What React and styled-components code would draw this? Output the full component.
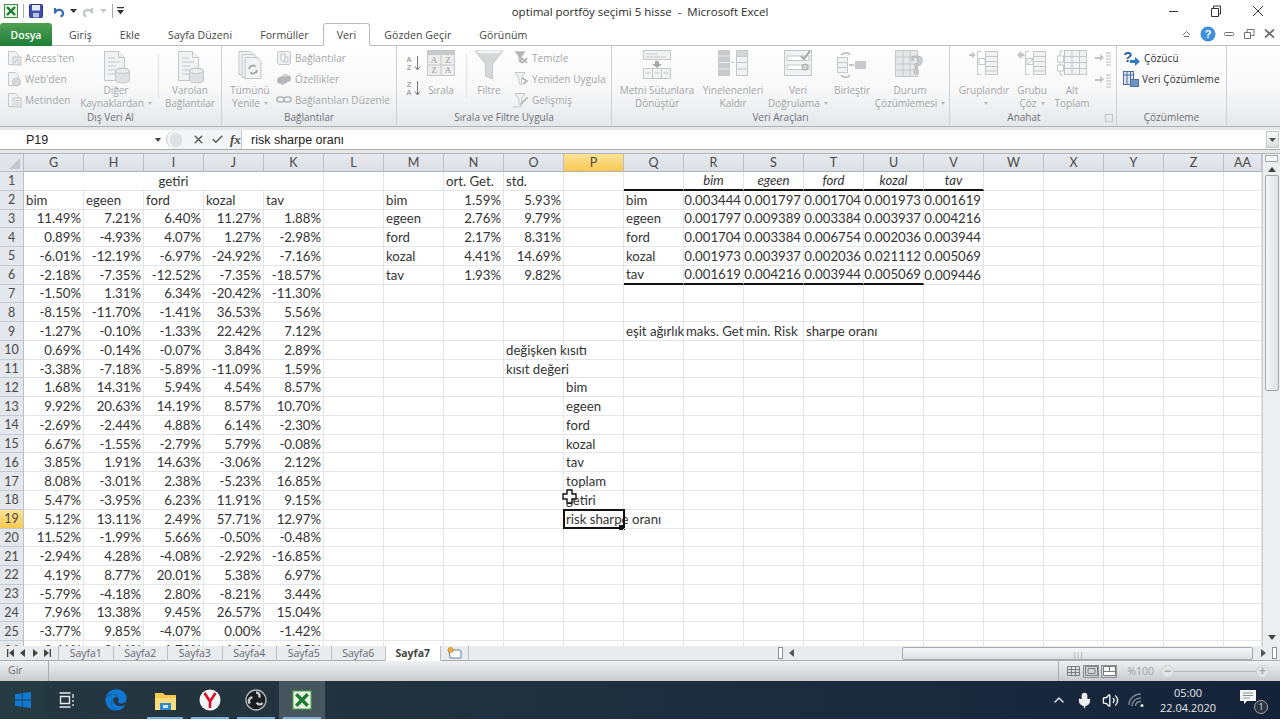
import React from "react";
import styled, { createGlobalStyle } from "styled-components";
import { Check, ChevronUp, Mic, Volume2, X } from "lucide-react";
import { FaEdge } from "react-icons/fa";

const GlobalStyle = createGlobalStyle`
  html, body {
    margin: 0;
    width: 1280px;
    height: 720px;
    overflow: hidden;
    background: #fff;
  }
  * { box-sizing: border-box; }
`;

const UI_FONT = `"Open Sans", "Noto Sans", sans-serif`;
const CELL_FONT = `Lato, "Open Sans", sans-serif`;
const LINE = "#c5c7ca";
const FILL = "#f1f2f3";
const DARK = "#b3b5b8";

const Window = styled.div`
  width: 1280px;
  height: 720px;
  display: flex;
  flex-direction: column;
  font-family: ${UI_FONT};
  overflow: hidden;
`;

/* title bar */
const TitleBar = styled.div`
  height: 22px;
  display: grid;
  grid-template-columns: 1fr auto 1fr;
  align-items: center;
  background: #fff;
`;
const QuickAccess = styled.div`
  display: flex;
  align-items: center;
  padding-left: 4px;
  height: 100%;
`;
const QuickSep = styled.span`
  width: 1px;
  height: 14px;
  background: #a9abae;
  margin: ${(p) => p.$m || "0 6px"};
`;
const TitleText = styled.div`
  font-size: 11.5px;
  color: #2b2b2b;
  white-space: pre;
`;
const WindowButtons = styled.div`
  display: flex;
  justify-content: flex-end;
  align-items: center;
  padding-right: 16px;
  gap: 30px;
`;

/* tabs */
const TabRow = styled.div`
  height: 24px;
  display: flex;
  align-items: flex-end;
  background: #fff;
  border-bottom: 1px solid #babcbf;
`;
const FileTab = styled.div`
  width: 52px;
  height: 23px;
  margin-right: 3px;
  margin-bottom: -1px;
  background: linear-gradient(#4fa053, #1f7d37);
  border-radius: 3px 3px 0 0;
  color: #fff;
  font-size: 10.5px;
  font-weight: 600;
  display: flex;
  align-items: center;
  justify-content: center;
`;
const Tab = styled.div`
  height: 23px;
  padding: 0 13px;
  margin-bottom: -1px;
  font-size: 10.5px;
  letter-spacing: 0.1px;
  color: #444;
  display: flex;
  align-items: center;
  border: 1px solid ${(p) => (p.$active ? "#babcbf" : "transparent")};
  border-bottom: 1px solid ${(p) => (p.$active ? "#fff" : "transparent")};
  border-radius: 3px 3px 0 0;
  background: ${(p) => (p.$active ? "#fff" : "transparent")};
`;
const HelpButtons = styled.div`
  margin-left: auto;
  height: 23px;
  display: flex;
  align-items: center;
  gap: 7px;
  padding-right: 4px;
`;

/* ribbon */
const Ribbon = styled.div`
  height: 80px;
  display: flex;
  background: linear-gradient(#fefefe 0%, #f8f8f9 55%, #e5e7ea 100%);
`;
const Group = styled.div`
  width: ${(p) => p.$w}px;
  flex: none;
  display: flex;
  flex-direction: column;
  border-right: 1px solid #cfd1d4;
`;
const GroupBody = styled.div`
  height: 64px;
  display: flex;
  padding: 4px 0 0 ${(p) => p.$pl || 0}px;
`;
const GroupLabel = styled.div`
  height: 16px;
  line-height: 15px;
  text-align: center;
  font-size: 10px;
  color: #6d7278;
  padding-right: ${(p) => p.$pr || 0}px;
  position: relative;
`;
const Launcher = styled.span`
  position: absolute;
  right: 3px;
  top: 4px;
  width: 8px;
  height: 8px;
  border: 1px solid #c3c5c8;
`;
const LargeButton = styled.div`
  width: ${(p) => p.$w}px;
  margin-left: ${(p) => p.$ml || 0}px;
  flex: none;
  display: flex;
  flex-direction: column;
  align-items: center;
  font-size: 10px;
  line-height: 12.5px;
  color: ${(p) => (p.$on ? "#333" : "#a4a6a9")};
  text-align: center;
  white-space: nowrap;
`;
const LargeIcon = styled.div`
  height: 34px;
  display: flex;
  align-items: flex-start;
  justify-content: center;
`;
const Caret = styled.span`
  display: inline-block;
  margin-left: 4px;
  vertical-align: middle;
  border-left: 2.5px solid transparent;
  border-right: 2.5px solid transparent;
  border-top: 3px solid #b8babd;
`;
const SmallStack = styled.div`
  margin-left: ${(p) => p.$ml || 0}px;
  display: flex;
  flex-direction: column;
  gap: 4.5px;
  flex: none;
`;
const SmallButton = styled.div`
  height: 16.5px;
  display: flex;
  align-items: center;
  gap: 3px;
  font-size: 10px;
  letter-spacing: 0.1px;
  color: ${(p) => (p.$on ? "#333" : "#a4a6a9")};
  white-space: nowrap;
`;
const RibbonSep = styled.div`
  width: 1px;
  height: 44px;
  margin: 4px ${(p) => p.$mr || 0}px 0 ${(p) => p.$ml || 0}px;
  background: #e1e2e4;
  flex: none;
`;

/* formula bar */
const FormulaWrap = styled.div`
  height: 28px;
  background: #e6e7e9;
  border-top: 1px solid #b0b3b6;
  padding: 3px 0 3px;
  border-bottom: 1px solid #b3b5b8;
`;
const FormulaBar = styled.div`
  height: 20px;
  display: flex;
  align-items: center;
  background: #fff;
  border-bottom: 1px solid #a9abae;
  font-family: "Liberation Sans", sans-serif;
  font-size: 12.5px;
  color: #222;
`;
const NameBox = styled.div`
  width: 166px;
  display: flex;
  align-items: center;
  position: relative;
  justify-content: center;
  padding-right: 92px;
  height: 100%;
`;
const NameArrow = styled.span`
  position: absolute;
  right: 5px;
  top: 8px;
  border-left: 3px solid transparent;
  border-right: 3px solid transparent;
  border-top: 4px solid #444;
`;
const FormulaTools = styled.div`
  width: 76px;
  height: 100%;
  display: flex;
  align-items: center;
  gap: 6px;
  border-right: 1px solid #c6c8cb;
  background: #f3f4f5;
  border-radius: 10px 0 0 10px;
  border-left: 1px solid #c6c8cb;
  padding-left: 3px;
  flex: none;
`;
const Bubble = styled.span`
  width: 12px;
  height: 14px;
  border-radius: 7px;
  background: #dfe1e4;
  margin-right: 4px;
`;
const FxMark = styled.span`
  font-family: "Liberation Serif", serif;
  font-style: italic;
  font-weight: 700;
  font-size: 13px;
  color: #4a4a4a;
`;
const FormulaText = styled.div`
  flex: 1;
  padding-left: 9px;
`;
const FormulaExpand = styled.div`
  width: 13px;
  height: 17px;
  margin-right: 1px;
  background: linear-gradient(#fafafa, #dcdee1);
  border: 1px solid #c3c5c8;
  display: flex;
  align-items: center;
  justify-content: center;
`;

/* sheet */
const SheetArea = styled.div`
  height: 492px;
  display: flex;
  position: relative;
`;
const Grid = styled.div`
  width: 1262px;
  height: 492px;
  overflow: hidden;
  display: grid;
  grid-template-columns: 24px repeat(20, 60px) 38px;
  grid-template-rows: 18px repeat(26, 18.78px);
  font-family: ${CELL_FONT};
  font-size: 13.2px;
  color: #333;
  background: #fff;
`;
const Corner = styled.div`
  background: #e1e4e8;
  border-right: 1px solid #b9bcc2;
  border-bottom: 1px solid #b9bcc2;
  position: relative;
  &::after {
    content: "";
    position: absolute;
    right: 3px;
    bottom: 2px;
    border-left: 11px solid transparent;
    border-bottom: 11px solid #c3c7cc;
  }
`;
const ColHead = styled.div`
  background: ${(p) => (p.$sel ? "linear-gradient(#fbe39a, #f8c94f)" : "linear-gradient(#e6e9ed, #dcdfe4)")};
  border-right: 1px solid #bcc0c5;
  border-bottom: 1px solid #b0b3b8;
  color: #4a4a4a;
  font-size: 12.5px;
  display: flex;
  align-items: center;
  justify-content: center;
`;
const RowHead = styled(ColHead)`
  background: ${(p) => (p.$sel ? "linear-gradient(#fbe39a, #f8c94f)" : "#e4e7eb")};
  border-bottom: 1px solid #c6c9ce;
`;
const Cell = styled.div`
  border-right: 1px solid #e3e5e8;
  border-bottom: 1px solid ${(p) => (p.$under ? "#111" : "#e3e5e8")};
  ${(p) => p.$under && "border-bottom-width: 2px;"}
  ${(p) => p.$span && `grid-column: span ${p.$span};`}
  padding: 0 2px;
  white-space: nowrap;
  display: flex;
  align-items: center;
  position: relative;
  justify-content: ${(p) => ({ right: "flex-end", center: "center" }[p.$align] || "flex-start")};
  font-style: ${(p) => (p.$italic ? "italic" : "normal")};
`;
const Selection = styled.span`
  position: absolute;
  left: -1px;
  top: -1px;
  right: -2px;
  bottom: -1px;
  border: 2px solid #111;
  pointer-events: none;
  &::after {
    content: "";
    position: absolute;
    right: -2px;
    bottom: -3px;
    width: 6px;
    height: 5px;
    background: #111;
  }
`;
const CellCursor = styled.svg`
  position: absolute;
  left: 562px;
  top: 335px;
`;
const VScroll = styled.div`
  width: 18px;
  height: 100%;
  background: #eceef0;
  border-left: 1px solid #c8cacd;
  display: flex;
  flex-direction: column;
  align-items: center;
`;
const SplitBox = styled.div`
  width: 13px;
  height: 7px;
  margin-top: 1px;
  background: #f4f5f6;
  border: 1px solid #a8aaad;
`;
const ScrollArrow = styled.div`
  border-left: 4px solid transparent;
  border-right: 4px solid transparent;
  ${(p) => (p.$down ? "border-top: 5px solid #444;" : "border-bottom: 5px solid #444;")}
  margin: ${(p) => p.$m};
`;
const VThumb = styled.div`
  width: 14px;
  height: 216px;
  margin-top: 3px;
  border: 1px solid #a4a7ab;
  border-radius: 2px;
  background: linear-gradient(90deg, #f6f7f8, #dfe1e5);
  flex: none;
`;

/* sheet tabs */
const TabBar = styled.div`
  height: 15px;
  display: flex;
  align-items: center;
  background: #e9ebee;
  font-size: 10.5px;
  color: #5b5e62;
  border-bottom: 1px solid #a9abae;
  position: relative;
`;
const NavArrows = styled.div`
  width: 59px;
  height: 100%;
  display: flex;
  align-items: center;
  justify-content: space-around;
  padding: 0 4px;
  border-right: 1px solid #b5b7ba;
  color: #444;
`;
const SheetTab = styled.div`
  width: 54.5px;
  height: 15px;
  flex: none;
  text-align: center;
  line-height: 14px;
  background: ${(p) => (p.$active ? "#fff" : "transparent")};
  font-weight: ${(p) => (p.$active ? 700 : 400)};
  color: ${(p) => (p.$active ? "#444" : "#666a6e")};
  border-right: 1px solid #bfc1c4;
  transform: skewX(0deg);
`;
const NewSheet = styled.div`
  width: 28px;
  height: 100%;
  display: flex;
  align-items: center;
  justify-content: center;
  border-right: 1px solid #bfc1c4;
  flex: none;
`;
const HScrollZone = styled.div`
  margin-left: auto;
  width: 502px;
  height: 100%;
  display: flex;
  align-items: center;
`;
const MiniSplit = styled.span`
  width: 5px;
  height: 12px;
  border: 1px solid #8f9295;
  background: #fff;
  flex: none;
  margin: ${(p) => p.$m};
`;
const HThumb = styled.div`
  width: 351px;
  height: 13px;
  margin-left: 108px;
  margin-right: 8px;
  border: 1px solid #a7a9ad;
  border-radius: 2px;
  background: linear-gradient(#f7f8f9, #dcdee2);
  flex: none;
  display: flex;
  align-items: center;
  justify-content: center;
  color: #999;
  font-size: 8px;
  letter-spacing: -1px;
`;
const SideArrow = styled.span`
  border-top: 4px solid transparent;
  border-bottom: 4px solid transparent;
  ${(p) => (p.$left ? "border-right: 5px solid #555;" : "border-left: 5px solid #555;")}
  flex: none;
`;

/* status bar */
const StatusBar = styled.div`
  height: 20px;
  display: flex;
  align-items: center;
  background: linear-gradient(#eff0f2, #c9cbcf);
  font-size: 10.5px;
  color: #6a6d71;
`;
const StatusMode = styled.div`
  width: 49px;
  height: 100%;
  padding-left: 8px;
  line-height: 19px;
  border-right: 1px solid #a9abae;
`;
const ViewButtons = styled.div`
  margin-left: auto;
  display: flex;
  align-items: center;
  gap: 2px;
  padding-left: 6px;
  border-left: 1px solid #a9abae;
  height: 100%;
`;
const ViewButton = styled.div`
  width: 16px;
  height: 13px;
  display: flex;
  align-items: center;
  justify-content: center;
  background: ${(p) => (p.$on ? "#d3d5d8" : "transparent")};
  border: 1px solid ${(p) => (p.$on ? "#8d8f92" : "transparent")};
`;
const ZoomPct = styled.div`
  margin: 0 7px 0 10px;
  color: #a2a4a7;
  font-size: 10.5px;
`;
const ZoomTrack = styled.div`
  width: 108px;
  margin-right: 11px;
  display: flex;
  align-items: center;
  justify-content: space-between;
  position: relative;
  &::before {
    content: "";
    position: absolute;
    left: 10px;
    right: 10px;
    top: 6px;
    height: 1px;
    background: #b6b8bb;
  }
`;
const ZoomKnob = styled.span`
  width: 13px;
  height: 13px;
  border-radius: 50%;
  background: #e3e4e6;
  border: 1px solid #d0d2d4;
  color: #a8aaad;
  font: 700 12px/10px "Liberation Sans", sans-serif;
  text-align: center;
  position: relative;
`;

/* taskbar */
const Taskbar = styled.div`
  height: 38px;
  flex: none;
  display: flex;
  align-items: center;
  background: linear-gradient(90deg, #25373f 0%, #1f2f3e 45%, #15233a 100%);
  color: #dfe3e8;
`;
const StartButton = styled.div`
  width: 45px;
  height: 100%;
  display: flex;
  align-items: center;
  justify-content: center;
  background: #263a42;
`;
const TaskItem = styled.div`
  width: ${(p) => p.$w || 46}px;
  height: 100%;
  flex: none;
  display: flex;
  align-items: center;
  justify-content: center;
  position: relative;
  background: ${(p) => (p.$active ? "#47565e" : "transparent")};
  ${(p) =>
    p.$open &&
    `&::after {
      content: "";
      position: absolute;
      left: 4px;
      right: 4px;
      bottom: 0;
      height: 2px;
      background: #7db2d6;
    }`}
`;
const Tray = styled.div`
  margin-left: auto;
  height: 100%;
  display: flex;
  align-items: center;
  gap: 9px;
  padding-right: 18px;
`;
const Clock = styled.div`
  width: 62px;
  margin-left: 2px;
  text-align: center;
  font-size: 11px;
  line-height: 15.5px;
  color: #e4e7ea;
`;
const NoticeBadge = styled.div`
  margin-left: 12px;
  position: relative;
  width: 22px;
  height: 24px;
`;
const NoticeCount = styled.span`
  position: absolute;
  right: -6px;
  bottom: -2px;
  width: 14px;
  height: 14px;
  border-radius: 50%;
  background: #2a3440;
  border: 1px solid #aaa;
  font-size: 9px;
  line-height: 12px;
  text-align: center;
`;

/* --- drawn icons --- */
const ExcelLogo = ({ s = 14 }) => (
  <svg width={s} height={s} viewBox="0 0 14 14">
    <rect x="0.5" y="0.5" width="13" height="13" fill="#eaf3e6" stroke="#3b8a3f" />
    <path d="M3 3l8 8M11 3l-8 8" stroke="#1f7a32" strokeWidth="2.4" />
  </svg>
);
const SaveIcon = () => (
  <svg width="14" height="14" viewBox="0 0 14 14">
    <rect x="0.5" y="0.5" width="13" height="13" rx="1" fill="#3f4fb0" stroke="#2c3680" />
    <rect x="3" y="1" width="8" height="5.5" fill="#e8ecf5" />
    <rect x="4" y="9" width="6" height="4.5" fill="#b9c1df" />
  </svg>
);
const UndoIcon = ({ off }) => (
  <svg width="13" height="13" viewBox="0 0 13 13" fill="none">
    <path d="M3 8.5V3M3 7.5c1.5-3 7-4 8 .5 .3 1.5-1 3-2.5 3.5" stroke={off ? "#c3c6ca" : "#3a6db5"} strokeWidth="2.2" />
  </svg>
);
const RedoIcon = () => (
  <svg width="13" height="13" viewBox="0 0 13 13" fill="none">
    <path d="M10 8.5V3M10 7.5c-1.5-3-7-4-8 .5-.3 1.5 1 3 2.5 3.5" stroke="#c3c6ca" strokeWidth="2.2" />
  </svg>
);
const DropMark = ({ c = "#333", m = "0 0 0 5px" }) => (
  <svg width="7" height="4" viewBox="0 0 7 4" style={{ margin: m }}>
    <path d="M0 0h7L3.5 4z" fill={c} />
  </svg>
);
const CustomizeMark = () => (
  <svg width="7" height="8" viewBox="0 0 7 8">
    <path d="M0 0h7v1.3H0zM0 3h7L3.5 7.5z" fill="#333" />
  </svg>
);
const WinIcon = ({ kind }) => (
  <svg width="12" height="12" viewBox="0 0 12 12" fill="none" stroke="#333" strokeWidth="1">
    {kind === "min" && <path d="M1 6.5h9" />}
    {kind === "max" && <path d="M1.5 3.5h7v8h-7zM3.5 3.5V1h7v8h-2" />}
    {kind === "close" && <path d="M1 1l10 10M11 1L1 11" />}
  </svg>
);
const HelpIcon = () => (
  <svg width="16" height="16" viewBox="0 0 16 16">
    <circle cx="8" cy="8" r="7.5" fill="#3f8fdc" />
    <text x="8" y="12" textAnchor="middle" fontSize="11" fontWeight="700" fill="#fff" fontFamily="Liberation Sans">?</text>
  </svg>
);
const MiniWin = ({ kind }) => (
  <svg width="13" height="11" viewBox="0 0 13 11" fill="none" stroke="#6e7175">
    {kind === "up" && <path d="M3 7l3.5-3.5L10 7M4 8.5h5" />}
    {kind === "min" && <rect x="1.5" y="4.5" width="9" height="3" rx="1" />}
    {kind === "max" && <path d="M1.5 4.5h6v6h-6zM4 4.5V1.5h7v6H7.5" />}
    {kind === "close" && <path d="M2 1.5l9 8M11 1.5l-9 8" strokeWidth="1.8" />}
  </svg>
);
const Small = ({ children }) => (
  <svg width="16" height="16" viewBox="0 0 16 16" fill={FILL} stroke={LINE}>
    {children}
  </svg>
);
const PageSm = () => <path d="M2.5 1.5h7l3 3v10h-10z" />;
const AccessIc = () => (
  <Small><PageSm /><rect x="7" y="7" width="8" height="8" fill="#e4e5e7" /><path d="M9 13l2-4 2 4" /></Small>
);
const WebIc = () => (
  <Small><PageSm /><circle cx="10.5" cy="11" r="4" fill="#d8d9db" /></Small>
);
const TextIc = () => (
  <Small><PageSm /><rect x="7" y="6" width="8" height="9" /><path d="M8.5 8.5h5M8.5 11h5M8.5 13h5" /></Small>
);
const LinkIc = () => (
  <Small><rect x="1.5" y="1.5" width="13" height="13" rx="2" /><path d="M5 4h4v7H5zM9 7h3v5H7" /></Small>
);
const PropsIc = () => (
  <Small><path d="M1.5 7.5l8-4 5 2v4l-8 4-5-2z" fill={DARK} /><path d="M5 6l5-2 3 1" /></Small>
);
const ChainIc = () => (
  <Small><rect x="1" y="5" width="7" height="5" rx="2.5" fill="none" stroke={DARK} strokeWidth="1.6" /><rect x="8" y="5" width="7" height="5" rx="2.5" fill="none" stroke={DARK} strokeWidth="1.6" /></Small>
);
const ClearIc = () => (
  <Small><path d="M2 1.5h10L8.5 7v6L6 11.5V7z" fill={DARK} /><path d="M9 8l5 5M14 8l-5 5" stroke="#aaa" strokeWidth="1.6" /></Small>
);
const ReapplyIc = () => (
  <Small><path d="M2 1.5h10L8.5 7v7L6 12.5V7z" /><path d="M9 7l5 3-4 3" stroke={DARK} strokeWidth="1.6" fill="none" /></Small>
);
const AdvancedIc = () => (
  <Small><path d="M2 1.5h10L8.5 7v7L6 12.5V7z" /><path d="M7 12l7-7 1 1-7 7z" fill={DARK} /><path d="M0 15h8" /></Small>
);
const DocDbIc = () => (
  <svg width="30" height="34" viewBox="0 0 30 34" fill={FILL} stroke={LINE}>
    <path d="M3.5 1.5h14l6 6v23h-20z" />
    <path d="M7 8h7M7 12h12M7 16h8M7 20h8M7 24h8" />
    <path d="M17.5 1.5v6h6" />
    <path d="M14.5 21c0-4 14-4 14 0v9c0 4-14 4-14 0z" fill="#dfe0e2" />
    <ellipse cx="21.5" cy="21" rx="7" ry="2.5" fill="#eceded" />
  </svg>
);
const RefreshIc = () => (
  <svg width="26" height="30" viewBox="0 0 26 30" fill={FILL} stroke={LINE}>
    <path d="M2 1.5h12l4 4v19H2z" />
    <path d="M5 4.5h12l4 4v19H5z" />
    <path d="M8 7.5h12l4 4v17H8z" />
    <path d="M12 19a4 4 0 016.5-2.5M20 20a4 4 0 01-6.5 2.5" fill="none" stroke="#a8aaad" strokeWidth="2" />
  </svg>
);
const SortSmall = ({ top, bottom }) => (
  <svg width="18" height="17" viewBox="0 0 18 17">
    <text x="4" y="7" fontSize="7.5" fontWeight="700" textAnchor="middle" fill="#a6a8ab" fontFamily="Liberation Sans">{top}</text>
    <text x="4" y="15" fontSize="7.5" fontWeight="700" textAnchor="middle" fill="#a6a8ab" fontFamily="Liberation Sans">{bottom}</text>
    <path d="M12.5 1v13M10 11.5l2.5 3.5 2.5-3.5" stroke="#777" fill="none" />
  </svg>
);
const SortIc = () => (
  <svg width="28" height="26" viewBox="0 0 28 26" fill="#ededee" stroke={LINE}>
    <rect x="0.5" y="0.5" width="27" height="25" />
    <rect x="0.5" y="0.5" width="27" height="4" fill="#c8c9cb" />
    <path d="M14 5v20M1 15h26" />
    <g fontFamily="Liberation Serif" fontSize="9" fill="#9a9c9f" stroke="none" textAnchor="middle">
      <text x="7" y="13">A</text><text x="21" y="13">Z</text>
      <text x="7" y="23">Z</text><text x="21" y="23">A</text>
    </g>
  </svg>
);
const FunnelIc = () => (
  <svg width="30" height="30" viewBox="0 0 30 30">
    <path d="M1 1h28L18.5 14v15l-7-3V14z" fill="#d6d7d9" stroke="#c6c8cb" />
    <ellipse cx="15" cy="2" rx="13" ry="1.5" fill="#f1f2f3" />
  </svg>
);
const TextColsIc = () => (
  <svg width="30" height="30" viewBox="0 0 30 30" fill={FILL} stroke={LINE}>
    <rect x="1.5" y="0.5" width="27" height="9" />
    <path d="M4 4h12M4 7h20" />
    <path d="M13 11h4v3h3l-5 4-5-4h3z" fill="#a8aaad" stroke="none" />
    <rect x="1.5" y="18.5" width="27" height="10" />
    <path d="M10.5 18.5v10M19.5 18.5v10M3.5 23h5M12.5 23h5M21.5 23h5" />
  </svg>
);
const DuplicatesIc = () => (
  <svg width="30" height="26" viewBox="0 0 30 26" fill={FILL} stroke={LINE}>
    <rect x="0.5" y="0.5" width="11" height="25" fill="#c9cacc" />
    <path d="M0.5 6h11M0.5 12.5h11M0.5 19h11" stroke="#eee" />
    <rect x="18.5" y="0.5" width="11" height="25" />
    <rect x="18.5" y="0.5" width="11" height="6" fill="#d5d6d8" />
    <path d="M18.5 12.5h11M18.5 19h11M13 12.5h3" />
  </svg>
);
const ValidationIc = () => (
  <svg width="28" height="26" viewBox="0 0 28 26" fill={FILL} stroke={LINE}>
    <rect x="0.5" y="0.5" width="27" height="25" />
    <rect x="3" y="6" width="22" height="4.5" fill="#fff" />
    <rect x="3" y="15" width="22" height="4.5" fill="#fff" />
    <path d="M17 6l3 3 6-8" stroke="#a4a6a9" strokeWidth="2" fill="none" />
    <circle cx="21" cy="17" r="3" fill="#d3d4d6" stroke="#a4a6a9" />
  </svg>
);
const ConsolidateIc = () => (
  <svg width="30" height="30" viewBox="0 0 30 30" fill={FILL} stroke={LINE}>
    <rect x="0.5" y="7.5" width="10" height="15" />
    <path d="M0.5 12.5h10M0.5 17.5h10" />
    <rect x="18.5" y="11.5" width="10" height="7" fill="#c9cacc" />
    <path d="M12 15h5M4 5c4-4 8-2 9 0M4 25c4 4 8 2 9 0" stroke="#b4b6b9" strokeWidth="1.5" fill="none" />
  </svg>
);
const ScenarioIc = () => (
  <svg width="30" height="28" viewBox="0 0 30 28" fill="#e6e7e8" stroke={LINE}>
    <rect x="0.5" y="0.5" width="22" height="26" />
    <path d="M8 0.5v26M15 0.5v26M0.5 7h22M0.5 14h22M0.5 20h22" />
    <text x="22" y="24" fontSize="27" fontWeight="700" textAnchor="middle" fill="#cfd0d2" stroke="#b9bbbe" fontFamily="Liberation Serif">?</text>
  </svg>
);
const OutlineIc = ({ kind }) => (
  <svg width="30" height="26" viewBox="0 0 30 26" fill={FILL} stroke={LINE}>
    <path d="M12 1.5H8.5v23H12" fill="none" />
    <rect x="16.5" y="1.5" width="12" height="23" />
    <path d="M16.5 6.5h12M16.5 11.5h12M16.5 16.5h12M16.5 21h12" />
    <rect x="10" y="8.5" width="6" height="6" fill="#fff" />
    {kind === "group" ? (
      <path d="M0 4h3V1.5L6.5 5 3 8.500V6H0z" fill="#c3c4c6" stroke="none" />
    ) : (
      <path d="M7 4H4V1.500L.5 5 4 8.500V6h3zM10 15l6-6" fill="#c3c4c6" />
    )}
  </svg>
);
const SubtotalIc = () => (
  <svg width="30" height="26" viewBox="0 0 30 26" fill={FILL} stroke={LINE}>
    <rect x="7.5" y="0.5" width="22" height="24" />
    <path d="M15 0.500v24M22.500 0.500v24M7.500 6.500h22M7.500 12.500h22M7.500 18.500h22" />
    <path d="M6 1H3v24h3" fill="none" />
    <rect x="0.5" y="6" width="6" height="6" fill="#fff" />
    <rect x="0.5" y="15" width="6" height="6" fill="#fff" />
  </svg>
);
const DetailIc = () => (
  <svg width="16" height="14" viewBox="0 0 16 14" fill="none">
    <path d="M0 5h5V2l4 3.500L5 9V7H0z" fill="#c3c4c6" />
    <path d="M11 1h5M11 4h5M11 7h5M11 10h5M11 13h5" stroke="#b8babd" />
  </svg>
);
const SolverIc = () => (
  <svg width="18" height="17" viewBox="0 0 18 17">
    <text x="5" y="12" fontSize="15" fontWeight="700" fill="#2a5ea8" fontFamily="Liberation Sans" textAnchor="middle">?</text>
    <path d="M7 10h5V7l5 4.500-5 4.500v-3H7z" fill="#2f79c8" />
  </svg>
);
const AnalysisIc = () => (
  <svg width="16" height="16" viewBox="0 0 16 16" fill="#fff" stroke="#4c6f9e">
    <rect x="0.5" y="0.5" width="10" height="13" fill="#dbe5f1" />
    <path d="M0.500 4h10M4 .5v13M7.500 .5v13" />
    <rect x="7.500" y="8.500" width="8" height="7" fill="#6d94c5" />
  </svg>
);
const NewSheetIc = () => (
  <svg width="15" height="12" viewBox="0 0 15 12" fill="#fff" stroke="#5f7f9e">
    <path d="M2 3h11l1 1v7H3z" />
    <circle cx="3.500" cy="3" r="2.500" fill="#f2b04a" stroke="#d98b1d" />
  </svg>
);
const NavMark = ({ dir, bar }) => (
  <svg width="7" height="8" viewBox="0 0 7 8" fill="#444">
    {dir === "l" ? <path d={bar ? "M0 0h1.300v8H0zM7 0v8L2 4z" : "M6 0v8L1 4z"} /> : <path d={bar ? "M5.700 0H7v8H5.700zM0 0v8l5-4z" : "M1 0v8l5-4z"} />}
  </svg>
);
const GridView = ({ kind }) => (
  <svg width="13" height="10" viewBox="0 0 13 10" fill="none" stroke="#7b7d80">
    {kind === "grid" && <path d="M.5.500h12v9H.500zM.500 3.500h12M.500 6.500h12M4.500.500v9M8.500.500v9" />}
    {kind === "page" && <path d="M.5.500h12v9H.500zM3 2.500h7v5H3z" />}
    {kind === "break" && <path d="M.5.500h12v9H.500zM6.500.500v5M.500 5.500h12" fill="#fff" strokeWidth="1.200" />}
  </svg>
);
const WindowsLogo = () => (
  <svg width="16" height="16" viewBox="0 0 16 16" fill="#0f7ad6">
    <path d="M0 2.300l6.800-1V7.500H0zM7.600 1.100L16 0v7.500H7.600zM0 8.400h6.800v6.300l-6.800-1zM7.600 8.400H16V16l-8.400-1.200z" />
  </svg>
);
const TaskViewIc = () => (
  <svg width="16" height="16" viewBox="0 0 16 16" fill="none" stroke="#e8ebee">
    <path d="M.5 1h11M.5 15h11M1.500 4.500h9v7h-9zM14 2v4M14 8v2M14 12v2" strokeWidth="1.300" />
  </svg>
);
const FolderIc = () => (
  <svg width="21" height="19" viewBox="0 0 21 19">
    <path d="M0 2h8l2 2h11v15H0z" fill="#f4c94e" />
    <path d="M0 7h21v12H0z" fill="#f9dc7c" />
    <rect x="5" y="12" width="11" height="7" fill="#2f8ad1" />
    <rect x="8" y="14" width="5" height="3" fill="#cfe7f6" />
  </svg>
);
const YandexIc = () => (
  <svg width="22" height="22" viewBox="0 0 22 22">
    <circle cx="11" cy="11" r="10.500" fill="#f4f4f4" />
    <path d="M5.500 4l5.500 8.500V19M16.500 4L11 12.500" stroke="#d8112a" strokeWidth="2.600" fill="none" />
  </svg>
);
const ObsIc = () => (
  <svg width="22" height="22" viewBox="0 0 22 22" fill="none">
    <circle cx="11" cy="11" r="10" fill="#1c1d20" stroke="#b8babc" strokeWidth="1.300" />
    <path d="M11 3.500a3.500 3.500 0 013.200 5M17.500 14a3.500 3.500 0 01-5.800-.3M5 14.500a3.500 3.500 0 012.500-6" stroke="#c9cbcd" strokeWidth="2.400" />
  </svg>
);
const WifiDim = () => (
  <svg width="18" height="16" viewBox="0 0 18 16" fill="none" stroke="#7f8894" strokeWidth="1.400">
    <path d="M1 13C1 7 6 2 13 2M4 14c0-4 3-8 9-8M7.500 14c0-3 2-4.500 5.500-4.500" />
    <circle cx="14" cy="13.500" r="1.500" fill="#e8ebee" stroke="none" />
  </svg>
);
const NoticeIc = () => (
  <svg width="16" height="15" viewBox="0 0 16 15">
    <path d="M0 0h16v11H7l-3 3v-3H0z" fill="#f4f5f6" />
    <path d="M3 3h10M3 5.500h10M3 8h7" stroke="#8a8f96" />
  </svg>
);

/* --- sheet data --- */
const COLS = ["G", "H", "I", "J", "K", "L", "M", "N", "O", "P", "Q", "R", "S", "T", "U", "V", "W", "X", "Y", "Z", "AA"];

const RETURNS = [
  ["11.49%", "7.21%", "6.40%", "11.27%", "1.88%"],
  ["0.89%", "-4.93%", "4.07%", "1.27%", "-2.98%"],
  ["-6.01%", "-12.19%", "-6.97%", "-24.92%", "-7.16%"],
  ["-2.18%", "-7.35%", "-12.52%", "-7.35%", "-18.57%"],
  ["-1.50%", "1.31%", "6.34%", "-20.42%", "-11.30%"],
  ["-8.15%", "-11.70%", "-1.41%", "36.53%", "5.56%"],
  ["-1.27%", "-0.10%", "-1.33%", "22.42%", "7.12%"],
  ["0.69%", "-0.14%", "-0.07%", "3.84%", "2.89%"],
  ["-3.38%", "-7.18%", "-5.89%", "-11.09%", "1.59%"],
  ["1.68%", "14.31%", "5.94%", "4.54%", "8.57%"],
  ["9.92%", "20.63%", "14.19%", "8.57%", "10.70%"],
  ["-2.69%", "-2.44%", "4.88%", "6.14%", "-2.30%"],
  ["6.67%", "-1.55%", "-2.79%", "5.79%", "-0.08%"],
  ["3.85%", "1.91%", "14.63%", "-3.06%", "2.12%"],
  ["8.08%", "-3.01%", "2.38%", "-5.23%", "16.85%"],
  ["5.47%", "-3.95%", "6.23%", "11.91%", "9.15%"],
  ["5.12%", "13.11%", "2.49%", "57.71%", "12.97%"],
  ["11.52%", "-1.99%", "5.66%", "-0.50%", "-0.48%"],
  ["-2.94%", "4.28%", "-4.08%", "-2.92%", "-16.85%"],
  ["4.19%", "8.77%", "20.01%", "5.38%", "6.97%"],
  ["-5.79%", "-4.18%", "2.80%", "-8.21%", "3.44%"],
  ["7.96%", "13.38%", "9.45%", "26.57%", "15.04%"],
  ["-3.77%", "9.85%", "-4.07%", "0.00%", "-1.42%"],
  ["-2.41%", "-3.16%", "1.72%", "-4.38%", "-2.05%"],
];

const NAMES = ["bim", "egeen", "ford", "kozal", "tav"];
const COV = [
  ["0.003444", "0.001797", "0.001704", "0.001973", "0.001619"],
  ["0.001797", "0.009389", "0.003384", "0.003937", "0.004216"],
  ["0.001704", "0.003384", "0.006754", "0.002036", "0.003944"],
  ["0.001973", "0.003937", "0.002036", "0.021112", "0.005069"],
  ["0.001619", "0.004216", "0.003944", "0.005069", "0.009446"],
];
const MEANS = [["1.59%", "5.93%"], ["2.76%", "9.79%"], ["2.17%", "8.31%"], ["4.41%", "14.69%"], ["1.93%", "9.82%"]];

const cells = {
  G1: { v: "getiri", align: "center", span: 5 },
  N1: { v: "ort. Get." },
  O1: { v: "std." },
  Q9: { v: "eşit ağırlık" },
  R9: { v: "maks. Get" },
  S9: { v: "min. Risk" },
  T9: { v: "sharpe oranı" },
  O10: { v: "değişken kısıtı" },
  O11: { v: "kısıt değeri" },
  P12: { v: "bim" },
  P13: { v: "egeen" },
  P14: { v: "ford" },
  P15: { v: "kozal" },
  P16: { v: "tav" },
  P17: { v: "toplam" },
  P18: { v: "getiri" },
  P19: { v: "risk sharpe oranı", selected: true },
};
NAMES.forEach((name, i) => {
  cells[COLS[i] + "2"] = { v: name };
  cells[COLS[11 + i] + "1"] = { v: name, align: "center", italic: true };
  cells["M" + (i + 2)] = { v: name };
  cells["Q" + (i + 2)] = { v: name };
  cells["N" + (i + 2)] = { v: MEANS[i][0], align: "right" };
  cells["O" + (i + 2)] = { v: MEANS[i][1], align: "right" };
  COV[i].forEach((v, j) => {
    cells[COLS[11 + j] + (i + 2)] = { v, align: "right" };
  });
});
RETURNS.forEach((row, r) => {
  row.forEach((v, c) => {
    cells[COLS[c] + (r + 3)] = { v, align: "right" };
  });
});

// rules drawn under the covariance table
const underlined = (col, row) => {
  const i = COLS.indexOf(col);
  if (row === 1) return i >= 10 && i <= 15;
  if (row === 6) return i >= 10 && i <= 14;
  return false;
};

const renderSheet = () => {
  const out = [<Corner key="corner" />];
  COLS.forEach((c) => out.push(<ColHead key={c} $sel={c === "P"}>{c}</ColHead>));
  for (let r = 1; r <= 26; r++) {
    out.push(<RowHead key={"r" + r} $sel={r === 19}>{r}</RowHead>);
    for (const c of COLS) {
      if (r === 1 && ["H", "I", "J", "K"].includes(c)) continue;
      const cell = cells[c + r] || {};
      out.push(
        <Cell key={c + r} $align={cell.align} $italic={cell.italic} $span={cell.span} $under={underlined(c, r)}>
          {cell.v}
          {cell.selected && <Selection />}
        </Cell>
      );
    }
  }
  return out;
};

const Small2 = ({ icon, label, on }) => (
  <SmallButton $on={on}>
    {icon}
    {label}
  </SmallButton>
);

const Large = ({ w, ml, icon, top, bottom, caret }) => (
  <LargeButton $w={w} $ml={ml}>
    <LargeIcon>{icon}</LargeIcon>
    <span>{top}</span>
    <span>
      {bottom}
      {caret && <Caret />}
    </span>
  </LargeButton>
);

export default function App() {
  return (
    <Window>
      <GlobalStyle />
      <TitleBar>
        <QuickAccess>
          <ExcelLogo />
          <QuickSep $m="0 5px 0 5px" />
          <SaveIcon />
          <span style={{ width: 9 }} />
          <UndoIcon />
          <DropMark m="0 0 0 5px" />
          <span style={{ width: 5 }} />
          <RedoIcon />
          <DropMark c="#c5c7ca" m="0 0 0 5px" />
          <QuickSep $m="0 4px 0 5px" />
          <CustomizeMark />
        </QuickAccess>
        <TitleText>optimal portföy seçimi 5 hisse  -  Microsoft Excel</TitleText>
        <WindowButtons>
          <WinIcon kind="min" />
          <WinIcon kind="max" />
          <WinIcon kind="close" />
        </WindowButtons>
      </TitleBar>

      <TabRow>
        <FileTab>Dosya</FileTab>
        <Tab>Giriş</Tab>
        <Tab>Ekle</Tab>
        <Tab>Sayfa Düzeni</Tab>
        <Tab>Formüller</Tab>
        <Tab $active>Veri</Tab>
        <Tab>Gözden Geçir</Tab>
        <Tab>Görünüm</Tab>
        <HelpButtons>
          <MiniWin kind="up" />
          <HelpIcon />
          <MiniWin kind="min" />
          <MiniWin kind="max" />
          <MiniWin kind="close" />
        </HelpButtons>
      </TabRow>

      <Ribbon>
        <Group $w={222}>
          <GroupBody $pl={6}>
            <SmallStack style={{ width: 74 }}>
              <Small2 icon={<AccessIc />} label="Access'ten" />
              <Small2 icon={<WebIc />} label="Web'den" />
              <Small2 icon={<TextIc />} label="Metinden" />
            </SmallStack>
            <Large w={72} icon={<DocDbIc />} top="Diğer" bottom="Kaynaklardan" caret />
            <RibbonSep $ml={6} />
            <Large w={62} icon={<DocDbIc />} top="Varolan" bottom="Bağlantılar" />
          </GroupBody>
          <GroupLabel>Dış Veri Al</GroupLabel>
        </Group>

        <Group $w={175}>
          <GroupBody $pl={4}>
            <Large w={48} icon={<RefreshIc />} top="Tümünü" bottom="Yenile" caret />
            <SmallStack $ml={2}>
              <Small2 icon={<LinkIc />} label="Bağlantılar" />
              <Small2 icon={<PropsIc />} label="Özellikler" />
              <Small2 icon={<ChainIc />} label="Bağlantıları Düzenle" />
            </SmallStack>
          </GroupBody>
          <GroupLabel>Bağlantılar</GroupLabel>
        </Group>

        <Group $w={215}>
          <GroupBody $pl={8}>
            <SmallStack style={{ width: 18, gap: 8, marginTop: 5 }}>
              <SortSmall top="A" bottom="Z" />
              <SortSmall top="Z" bottom="A" />
            </SmallStack>
            <Large w={36} icon={<SortIc />} top="Sırala" />
            <RibbonSep $ml={7} />
            <Large w={36} ml={4} icon={<FunnelIc />} top="Filtre" />
            <SmallStack $ml={6}>
              <Small2 icon={<ClearIc />} label="Temizle" />
              <Small2 icon={<ReapplyIc />} label="Yeniden Uygula" />
              <Small2 icon={<AdvancedIc />} label="Gelişmiş" />
            </SmallStack>
          </GroupBody>
          <GroupLabel>Sırala ve Filtre Uygula</GroupLabel>
        </Group>

        <Group $w={338}>
          <GroupBody $pl={6}>
            <Large w={78} icon={<TextColsIc />} top="Metni Sütunlara" bottom="Dönüştür" />
            <Large w={62} ml={6} icon={<DuplicatesIc />} top="Yinelenenleri" bottom="Kaldır" />
            <Large w={64} ml={2} icon={<ValidationIc />} top="Veri" bottom="Doğrulama" caret />
            <Large w={44} icon={<ConsolidateIc />} top="Birleştir" />
            <Large w={72} icon={<ScenarioIc />} top="Durum" bottom="Çözümlemesi" caret />
          </GroupBody>
          <GroupLabel>Veri Araçları</GroupLabel>
        </Group>

        <Group $w={167}>
          <GroupBody $pl={6}>
            <Large w={56} icon={<OutlineIc kind="group" />} top="Gruplandır" bottom={<Caret />} />
            <Large w={36} ml={2} icon={<OutlineIc kind="ungroup" />} top="Grubu" bottom="Çöz" caret />
            <Large w={40} ml={2} icon={<SubtotalIc />} top="Alt" bottom="Toplam" />
            <SmallStack $ml={3} style={{ gap: 8, marginTop: 2 }}>
              <DetailIc />
              <DetailIc />
            </SmallStack>
          </GroupBody>
          <GroupLabel $pr={18}>
            Anahat
            <Launcher />
          </GroupLabel>
        </Group>

        <Group $w={110}>
          <GroupBody $pl={6}>
            <SmallStack>
              <Small2 on icon={<SolverIc />} label="Çözücü" />
              <Small2 on icon={<AnalysisIc />} label="Veri Çözümleme" />
            </SmallStack>
          </GroupBody>
          <GroupLabel>Çözümleme</GroupLabel>
        </Group>
      </Ribbon>

      <FormulaWrap>
        <FormulaBar>
          <NameBox>
            P19
            <NameArrow />
          </NameBox>
          <FormulaTools>
            <Bubble />
            <X size={13} strokeWidth={2.6} color="#555" />
            <Check size={13} strokeWidth={2.6} color="#555" />
            <FxMark>fx</FxMark>
          </FormulaTools>
          <FormulaText>risk sharpe oranı</FormulaText>
          <FormulaExpand>
            <DropMark c="#555" m="0" />
          </FormulaExpand>
        </FormulaBar>
      </FormulaWrap>

      <SheetArea>
        <Grid>{renderSheet()}</Grid>
        <CellCursor width="15" height="15" viewBox="0 0 15 15">
          <path d="M5 1h5v4h4v5h-4v4H5v-4H1V5h4z" fill="#fff" stroke="#111" strokeWidth="1.400" />
        </CellCursor>
        <VScroll>
          <SplitBox />
          <ScrollArrow $m="5px 0 0" />
          <VThumb />
          <ScrollArrow $down $m="auto 0 6px" />
        </VScroll>
      </SheetArea>

      <TabBar>
        <NavArrows>
          <NavMark dir="l" bar />
          <NavMark dir="l" />
          <NavMark dir="r" />
          <NavMark dir="r" bar />
        </NavArrows>
        {[1, 2, 3, 4, 5, 6, 7].map((n) => (
          <SheetTab key={n} $active={n === 7}>Sayfa{n}</SheetTab>
        ))}
        <NewSheet>
          <NewSheetIc />
        </NewSheet>
        <HScrollZone>
          <MiniSplit $m="0 6px 0 0" />
          <SideArrow $left />
          <HThumb>|||</HThumb>
          <SideArrow />
          <MiniSplit $m="0 0 0 6px" />
        </HScrollZone>
      </TabBar>

      <StatusBar>
        <StatusMode>Gir</StatusMode>
        <ViewButtons>
          <ViewButton><GridView kind="grid" /></ViewButton>
          <ViewButton $on><GridView kind="page" /></ViewButton>
          <ViewButton $on><GridView kind="break" /></ViewButton>
        </ViewButtons>
        <ZoomPct>%100</ZoomPct>
        <ZoomTrack>
          <ZoomKnob>−</ZoomKnob>
          <ZoomKnob>+</ZoomKnob>
        </ZoomTrack>
      </StatusBar>

      <Taskbar>
        <StartButton>
          <WindowsLogo />
        </StartButton>
        <TaskItem $w={44}><TaskViewIc /></TaskItem>
        <TaskItem $w={54} $open={false}><FaEdge size={22} color="#0f78d4" /></TaskItem>
        <TaskItem $w={44} $open><FolderIc /></TaskItem>
        <TaskItem $open><YandexIc /></TaskItem>
        <TaskItem $open><ObsIc /></TaskItem>
        <TaskItem $active $open><ExcelLogo s={20} /></TaskItem>
        <Tray>
          <ChevronUp size={16} color="#e8ebee" />
          <Mic size={17} color="#eceef0" fill="#eceef0" />
          <Volume2 size={17} color="#e8ebee" />
          <WifiDim />
          <Clock>
            05:00
            <br />
            22.04.2020
          </Clock>
          <NoticeBadge>
            <NoticeIc />
            <NoticeCount>1</NoticeCount>
          </NoticeBadge>
        </Tray>
      </Taskbar>
    </Window>
  );
}
